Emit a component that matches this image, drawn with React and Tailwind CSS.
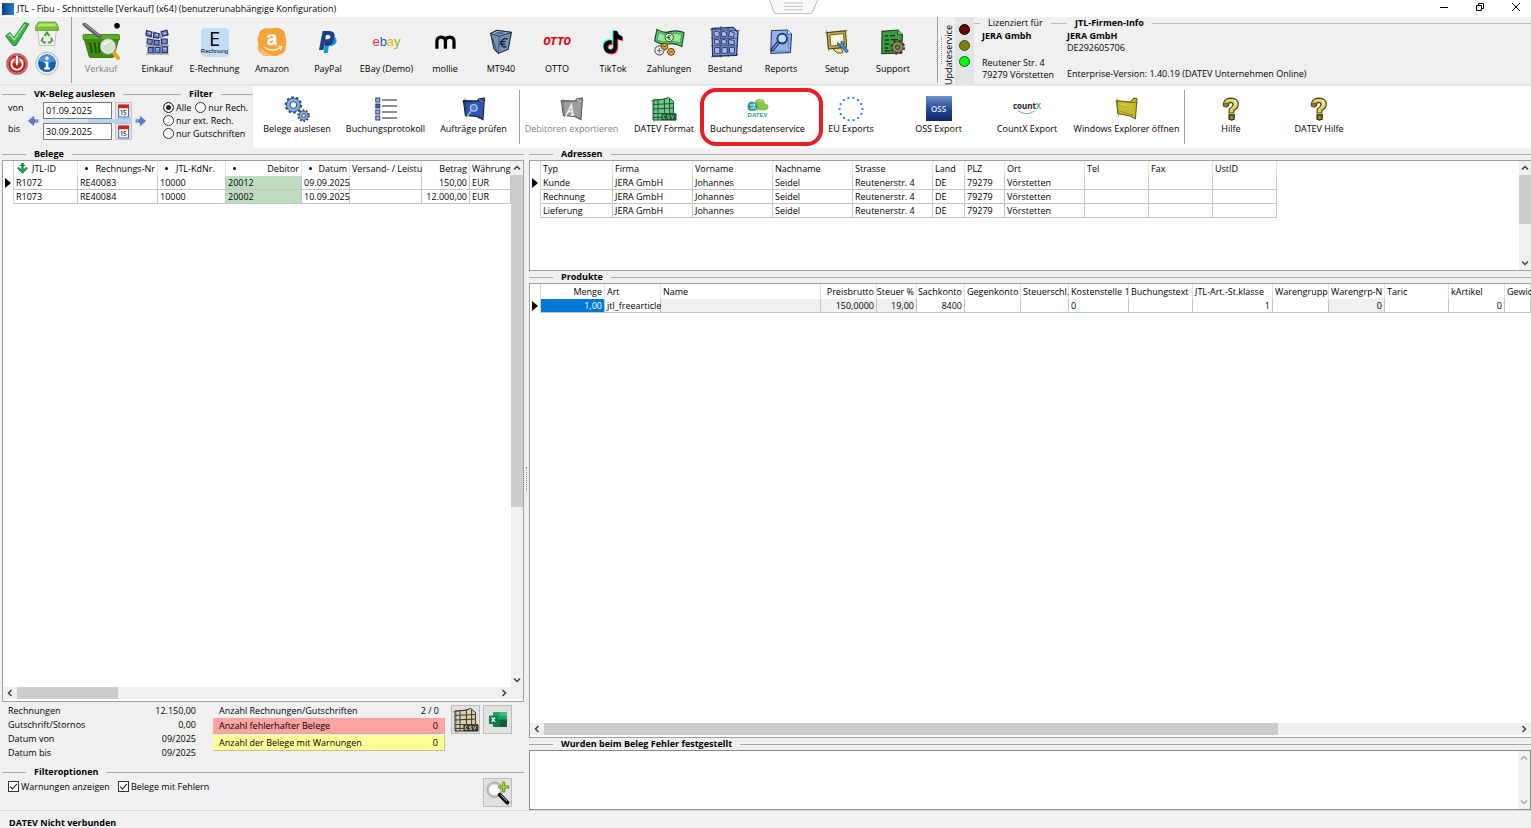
import React, { useState } from "react";

/* ---------- drawings ---------- */

const Svg = ({ w = 32, h = 32, box = "0 0 32 32", children }) => (
  <svg width={w} height={h} viewBox={box} fill="none" aria-hidden="true" className="block shrink-0">
    {children}
  </svg>
);

const CheckIcon = () => (
  <Svg w={26} h={26} box="0 0 26 26">
    <path d="M1.5 15 L6 11.5 L10 16.5 L20.5 1.5 L25 3 L12 24.5 L9 24.5 Z" fill="#3fae49" stroke="#2c8a38" strokeLinejoin="round" />
    <path d="M4 15 L6 13.4 L10.2 18.8 L21 3.4" stroke="#8fe08f" strokeWidth="1.6" />
  </Svg>
);

const RecycleIcon = () => (
  <Svg w={26} h={26} box="0 0 26 26">
    <path d="M3.5 8 L5.5 24.5 H20.5 L22.5 8 Z" fill="#f3f3f3" stroke="#bdbdbd" />
    <path d="M4 1.5 Q4 1 5 1 H21 Q22 1 22 1.5 L24.5 6 V9.5 H1.5 V6 Z" fill="#7cc13a" stroke="#5e9e26" strokeWidth=".8" />
    <path d="M5 2.6 H21 L22.6 5.4 H3.4 Z" fill="#b7e37c" />
    <path d="M10.6 15 L13 11.5 L15.4 15 M17 16.5 L18.2 19.5 L16 21.6 H13.8 M9 16.5 L7.8 19.5 L10 21.6 H12" stroke="#4fa02c" strokeWidth="2" />
  </Svg>
);

const PowerIcon = () => (
  <Svg w={24} h={24} box="0 0 24 24">
    <circle cx="12" cy="12" r="10.6" fill="#c4161c" stroke="#8f8f8f" strokeWidth="1" />
    <circle cx="12" cy="12" r="9.3" fill="none" stroke="#f2a2a2" strokeWidth=".9" />
    <path d="M4 10 A8.5 8 0 0 1 20 10 Q12 13 4 10Z" fill="#e2575b" />
    <path d="M8.6 7.8 A5.6 5.6 0 1 0 15.4 7.8 M12 4.6 V12.4" stroke="#fff" strokeWidth="2" strokeLinecap="round" />
  </Svg>
);

const InfoIcon = () => (
  <Svg w={24} h={25} box="0 0 24 25">
    <circle cx="12" cy="12.4" r="11.2" fill="#eef0f2" stroke="#a7abb0" strokeWidth=".9" />
    <circle cx="12" cy="12.2" r="8.9" fill="#1560ae" />
    <path d="M4 10 A8.2 7.6 0 0 1 20 10 Q12 13.4 4 10Z" fill="#4b93d6" />
    <circle cx="12" cy="7.3" r="1.7" fill="#fff" />
    <path d="M9.4 10.4 H13.4 V16.6 H15 V18.4 H9.2 V16.6 H10.8 V12.2 H9.4 Z" fill="#fff" />
  </Svg>
);

const BasketIcon = () => (
  <Svg w={38} h={38} box="0 0 38 38">
    <path d="M2 15 H37 L32 33 Q31.6 34.5 30 34.5 H9 Q7.4 34.5 7 33 Z" fill="#3f8f12" stroke="#2c5f10" strokeWidth=".8" />
    <path d="M1 12.5 Q1 11.5 2 11.5 H36.4 Q37.4 11.5 37.4 12.5 V16.8 H1.4 Z" fill="#5cae20" stroke="#35740f" strokeWidth=".8" />
    <path d="M8 19.5 L10 30 M12.5 19.5 L14 30 M17 19.5 L17.4 30 M30.5 19.5 L29.4 24" stroke="#215207" strokeWidth="1.9" />
    <path d="M2.5 1.5 L17.5 13.5" stroke="#5d5f61" strokeWidth="4" strokeLinecap="round" />
    <path d="M3 1.2 L17.5 12.6" stroke="#9a9c9e" strokeWidth="1.2" strokeLinecap="round" />
    <path d="M30.5 28 L36 35" stroke="#f0a51c" strokeWidth="4" strokeLinecap="round" />
    <circle cx="26" cy="23.5" r="6.8" fill="#cfe6c4" stroke="#e6e6e6" strokeWidth="2.2" />
    <circle cx="26" cy="23.5" r="7.8" stroke="#878787" strokeWidth=".7" />
    <path d="M22.3 22 A4.5 4.5 0 0 1 27 19.3" stroke="#fff" strokeWidth="1.5" />
    <circle cx="35" cy="2.8" r="2.8" fill="#000" />
  </Svg>
);

const BlocksIcon = () => (
  <Svg w={26} h={28} box="0 0 26 28">
    <path d="M2.6 2.4 L8 4.2 L7 9 L2 7.4Z M10.2 4.6 L15.4 5.8 L14.6 10.4 L9.4 9.2Z M17.6 3.6 L23 2.2 L24 7 L18.4 8.2Z M3.4 10.8 L8.4 11.8 L8 16.4 L3 15.8Z M10.4 12 L15.2 12.6 L15 17.2 L10.2 16.6Z M17.6 11 H23.2 V16 H17.6Z M4.2 19.4 H9 V24.8 H4.2Z M11 19.4 H16 V24.8 H11Z M18.2 18.8 H23.6 V24.6 H18.2Z" fill="#7389dc" stroke="#272d5c" strokeWidth="1.1" />
    <path d="M1 5 L8.6 9.4 L17 9.4 L25 5.4 M1.6 17.8 H25 M9.6 3 L9.6 26.4 M16.8 2.6 L17 26.4 M2 26 H24.6" stroke="#20274f" strokeWidth=".5" />
    <path d="M4 4.2 L6.8 5.2 M11.4 6.4 L14 7 M19.4 5.6 L22 5 M12 20.8 H14.6 M19.4 20.6 H22" stroke="#bccbff" strokeWidth="1" />
  </Svg>
);

const ERechnungIcon = () => (
  <span className="flex h-[29px] w-7 flex-col items-center justify-center rounded bg-[#c3dcf8] text-black">
    <span className="font-['Open_Sans',sans-serif] text-xl leading-[18px]">E</span>
    <span className="font-['Liberation_Sans',sans-serif] text-[6px] leading-[7px]">Rechnung</span>
  </span>
);

const AmazonIcon = () => (
  <Svg w={30} h={30} box="0 0 30 30">
    <path d="M5 2.5 Q9 .6 13 1.6 Q20 -.4 24 2 Q28.6 4 28.4 10 Q30.4 15 28.6 20 Q28.8 26 23.6 27.2 Q18 30.4 13 28.6 Q6.4 30.2 4 26.6 Q-.4 23 1.6 17.4 Q-.6 12 1.8 8.4 Q1.8 4.4 5 2.5Z" fill="#f8a23a" />
    <path d="M3 20 Q8 27 17 28 Q8 29.6 4 26.6Z" fill="#fbbd70" />
    <path d="M11.2 10.4 Q11.8 8.2 14.8 8.2 Q18 8.2 18 11 V15 Q18 16.6 19.2 17.8 M17.8 12.2 Q11.4 11.9 11.4 15 Q11.4 17.2 13.7 17.2 Q16.8 17.2 17.8 14" stroke="#fff" strokeWidth="2.5" />
    <path d="M6.6 19.6 Q14.6 25.8 23.4 20.8 M21.4 19.4 Q24 19 24.6 19.6 Q24.6 21 23.2 22.8" stroke="#fff" strokeWidth="1.2" />
  </Svg>
);

const PaypalIcon = () => (
  <Svg w={18} h={22} box="0 0 18 22">
    <path d="M15.6 6 Q19 8.6 16.9 12.2 Q15 15 10.9 15 H9.9 L8.7 22 H4.6 L6.6 8Z" fill="#139ad6" />
    <path d="M3.6 0 H10.4 Q16.4 .3 15.6 6 Q14.6 12 8.4 12 H6 L4.4 19 H0 Z" fill="#1f3f86" />
    <path d="M15.6 6 Q14.6 12 8.4 12 H6.2 L5.6 15.2 Q6 14.6 7 14.4 H9 Q14.8 13.6 15.6 6Z" fill="#232c65" />
    <path d="M7 4 H9.4 Q11.8 4.2 11.4 6.2 Q10.8 8.2 8.6 8.2 H6.2Z" fill="#f0f0f0" />
  </Svg>
);

const EbayIcon = () => (
  <span className="flex font-['Liberation_Sans',sans-serif] text-[13px] leading-4">
    <span className="text-[#e53238]">e</span>
    <span className="text-[#0064d2]">b</span>
    <span className="text-[#f5af02]">a</span>
    <span className="text-[#86b817]">y</span>
  </span>
);

const MollieIcon = () => (
  <Svg w={21} h={14} box="0 0 22 14">
    <path d="M2 14 V6.4 Q2 1.8 6.4 1.8 Q10.9 1.8 10.9 6.4 V14 M10.9 6.4 Q10.9 1.8 15.4 1.8 Q19.9 1.8 19.9 6.4 V14" stroke="#000" strokeWidth="3.4" />
  </Svg>
);

const Mt940Icon = () => (
  <Svg w={24} h={26} box="0 0 24 26">
    <path d="M1.6 4.6 L8 1.4 L22.4 3.4 L19.2 20.4 L9.4 24.4 L5 20Z" fill="#7192b8" stroke="#232a35" strokeWidth="1.1" />
    <path d="M1.6 4.6 L10.4 7.2 L22.4 3.4 L8 1.4Z" fill="#b5cde6" stroke="#232a35" strokeWidth="1" />
    <path d="M5 4.6 L10.4 6 L17.6 3.8 L9 2.6Z" fill="#496c94" />
    <path d="M10.4 7.2 L9.4 24.4 M3.4 9 L8 23" stroke="#2c3a4c" strokeWidth=".7" />
    <path d="M18.6 10 Q13 8.6 12.4 13.6 Q12 18.6 17.4 17.8 M10.8 12.6 H16.6 M10.6 15.2 H16" stroke="#141a24" strokeWidth="1.3" />
  </Svg>
);

const OttoIcon = () => (
  <span className="font-['Roboto',sans-serif] text-[11px] font-black italic leading-4 text-[#e30613]">OTTO</span>
);

const TiktokShape = ({ fill }) => (
  <path d="M10.4 0 H14.2 Q14.6 4.4 19 5 V9 Q16.4 9 14.2 7.4 V15.6 Q14 22.4 7.6 22.6 Q.6 22.2 .6 15.6 Q1 8.8 8.6 9 V13 Q4.8 12.6 4.6 15.8 Q4.8 18.6 7.6 18.6 Q10.4 18.4 10.4 15.4 Z" fill={fill} />
);
const TiktokIcon = () => (
  <Svg w={22} h={25} box="-1 -1 22 25">
    <g transform="translate(-1 -1)"><TiktokShape fill="#25f4ee" /></g>
    <g transform="translate(1 1)"><TiktokShape fill="#fe2c55" /></g>
    <TiktokShape fill="#000" />
  </Svg>
);

const MoneyIcon = () => (
  <Svg w={32} h={28} box="0 0 32 28">
    <path d="M4 1.4 Q11 6 17 3.6 Q24 1.8 31 4.6 L28.8 18.6 Q22 14.6 16 16 Q8 17.4 1.6 12.8 Z" fill="#5fce6c" stroke="#1f3a22" strokeWidth="1.1" />
    <path d="M6 4.4 Q11 7.6 17 5.8 Q23 4.4 28.6 6.6 L27.2 15 Q22 12.6 16 13.8 Q9 15 4 11.6Z" fill="#93e79b" stroke="#2d8a3b" strokeWidth=".7" />
    <circle cx="16.2" cy="9.4" r="4.2" fill="#d8f6d8" stroke="#1f3a22" strokeWidth=".9" />
    <path d="M18.2 7.8 Q14.6 6.8 14.6 9.6 Q14.8 12 18 11 M13.6 9.4 H17" stroke="#1f3a22" strokeWidth=".9" />
    <circle cx="6.4" cy="22.4" r="4.6" fill="#e9e9f4" stroke="#3a3a4a" strokeWidth="1" />
    <path d="M4 22.6 H8.6 M6.4 20 V25" stroke="#555" strokeWidth=".8" />
    <circle cx="11.6" cy="18.4" r="3.2" fill="#e3a035" stroke="#4e3208" strokeWidth=".9" />
    <circle cx="18" cy="23.8" r="3.5" fill="#e9a63c" stroke="#4e3208" strokeWidth=".9" />
    <path d="M10 18.4 H13 M16.4 23.8 H19.8" stroke="#4e3208" strokeWidth=".8" />
  </Svg>
);

const StockIcon = () => (
  <Svg w={30} h={32} box="0 0 30 32">
    <path d="M2 2.4 L23 1.4 L28 6 L26.6 29.4 L2.6 30.2Z" fill="#8ca4dc" stroke="#222c56" strokeWidth="1.2" />
    <path d="M4.4 5 L9.6 6.2 L8.8 11 L4 9.8Z M12 5 L17 6.6 L16 11 L11 10Z M19.6 5 L24.4 7 L23.4 11.6 L18.8 9.8Z M4.6 13 L9.6 14.2 L9 18.6 L4.4 17.6Z M12 13 L16.6 14.2 L16 18.4 L11.4 17.6Z M19 13.4 L24.4 14.6 L24 18.8 L18.6 18Z M4.6 21.6 H9.8 V27.6 H4.6Z M12 21.6 H17.2 V27.4 H12Z M19.4 21.4 H24.6 V27.2 H19.4Z" fill="#a4b9ec" stroke="#2c3a72" strokeWidth="1" />
    <path d="M0 3.4 L29.6 4.6 M1 31 L28.4 28.4 M10.8 0 V31.6 M18 1 L18.2 31 M1 19.8 H28 M1 12 L28 12.4" stroke="#222c56" strokeWidth=".7" />
  </Svg>
);

const ReportIcon = () => (
  <Svg w={24} h={26} box="0 0 24 26">
    <path d="M2.4 1.6 L18.6 1 L22.6 5 L21.4 23.6 L1.8 24.4Z" fill="#92b4e8" stroke="#24345c" strokeWidth="1" />
    <path d="M18.6 1 L18 5.4 L22.6 5" fill="#dbe8fc" stroke="#24345c" strokeWidth=".8" />
    <path d="M9.6 13.2 L3.4 20.6" stroke="#1c2a4e" strokeWidth="3.6" strokeLinecap="round" />
    <path d="M9.2 13.8 L3.8 20.2" stroke="#6c92d4" strokeWidth="1.6" strokeLinecap="round" />
    <circle cx="13.2" cy="9.6" r="4.8" fill="#c8dcfa" stroke="#24417c" strokeWidth="2" />
    <path d="M5 22.2 H20 M19.4 8 V20" stroke="#6284bf" strokeWidth=".8" />
  </Svg>
);

const SetupIcon = () => (
  <Svg w={24} h={26} box="0 0 24 26">
    <path d="M2 3.6 L20.6 1.8 L21.6 18.2 L3.4 20Z" fill="#c9b24a" stroke="#4a3f12" strokeWidth="1" />
    <path d="M4.8 6 L18.6 4.6 L19.2 15.6 L5.8 17.2Z" fill="#fbf6dc" stroke="#4a3f12" strokeWidth=".8" />
    <path d="M8 19.8 Q12 26 18 23.4 L16 19Z" fill="#f0d98a" stroke="#4a3f12" strokeWidth=".9" />
    <path d="M12.6 13.4 Q12 17.6 16 17.4 L21.2 23.8 L23.4 22 L18.4 16.2 Q19.4 12.6 16 12 L16.4 14.6 L14.8 15.4Z" fill="#4f92d6" stroke="#204a7c" strokeWidth=".9" />
    <path d="M0 3.8 L22.8 1.4 M1.6 1 L3.8 22" stroke="#4a3f12" strokeWidth=".5" />
  </Svg>
);

const SupportIcon = () => (
  <Svg w={26} h={27} box="0 0 26 27">
    <path d="M2 2.4 L18 1 L22.4 5.6 L21.6 24 L1.8 24.8Z" fill="#3f9b45" stroke="#173a19" strokeWidth="1.1" />
    <path d="M18 1 L17.6 5.6 L22.4 5.6" fill="#86cf88" stroke="#173a19" strokeWidth=".8" />
    <path d="M4.6 7 L8 6.6 M10 6.6 H15 M4.6 11 H9 M11 10.6 H18 M4.6 15 H9 M4.6 19 H8 M4.6 22 H10" stroke="#173a19" strokeWidth="1.3" />
    <circle cx="17.6" cy="18.2" r="6.3" stroke="#4a382c" strokeWidth="2.4" strokeDasharray="2.6 2.35" />
    <circle cx="17.6" cy="18.2" r="5.4" fill="#a08472" stroke="#4a382c" strokeWidth=".9" />
    <circle cx="17.6" cy="18.2" r="2.2" fill="#4a9b4e" stroke="#3a2a20" strokeWidth=".9" />
  </Svg>
);

const Gear = ({ cx, cy, r, hole }) => (
  <>
    <circle cx={cx} cy={cy} r={r} stroke="#2b4a6e" strokeWidth="2.6" strokeDasharray={`${(r * 6.283) / 20} ${(r * 6.283) / 20}`} />
    <circle cx={cx} cy={cy} r={r - 0.4} fill="#86afd8" stroke="#2b4a6e" strokeWidth=".9" />
    <circle cx={cx} cy={cy} r={hole} fill="#fff" stroke="#2b4a6e" strokeWidth="1" />
  </>
);
const GearsIcon = () => (
  <Svg w={26} h={26} box="0 0 26 26">
    <Gear cx={9.4} cy={9} r={7.4} hole={3.4} />
    <Gear cx={19.6} cy={19.6} r={5} hole={1.9} />
  </Svg>
);

const ListIcon = () => (
  <Svg w={24} h={24} box="0 0 24 24">
    {[2, 8, 14, 20].map((y) => (
      <g key={y}>
        <rect x="1.8" y={y - 1} width="4" height="4" fill={y === 8 ? "#3c63c4" : "#9bb4e4"} stroke="#26345c" strokeWidth=".9" />
        <path d={`M8 ${y + 1} H23`} stroke="#444" strokeWidth="1.2" />
      </g>
    ))}
  </Svg>
);

const OrdersIcon = () => (
  <Svg w={24} h={24} box="0 0 24 24">
    <path d="M1.4 3.6 L15 4 L17 1.8 L22.4 1.2 L21 22.6 L14.6 19.4 L3.4 18.4Z" fill="#3155ac" stroke="#131f44" strokeWidth="1.1" />
    <path d="M17 1.8 L19 4.4 L21.6 4" stroke="#8fb0f0" />
    <circle cx="11.8" cy="10.8" r="3.3" fill="#4f7ad6" stroke="#b4ccfa" strokeWidth="1.2" />
    <path d="M9.4 13.4 L5.4 19" stroke="#9dbaf2" strokeWidth="1.6" />
    <path d="M0 5 L23.6 3.6 M3 1 L4.4 20.4" stroke="#131f44" strokeWidth=".5" />
  </Svg>
);

const DebtorsIcon = () => (
  <Svg w={24} h={24} box="0 0 24 24">
    <path d="M1.4 3.6 L15 4 L17 1.8 L22.4 1.2 L21 22.6 L14.6 19.4 L3.4 18.4Z" fill="#9d9d9d" stroke="#5a5a5a" strokeWidth="1.1" />
    <path d="M17 1.8 L19 4.4 L21.6 4" stroke="#dedede" />
    <path d="M5 20.6 L11.4 8 L12.6 17.6 M7.4 15 L12.4 14.2 M3.6 21 L7 20.6 M10.6 18.2 L14.4 17.8" stroke="#f4f4f4" strokeWidth="1.5" />
    <path d="M0 5 L23.6 3.6 M3 1 L4.4 20.4" stroke="#6b6b6b" strokeWidth=".5" />
  </Svg>
);

const CsvIcon = ({ fill, ink }) => (
  <Svg w={26} h={26} box="0 0 26 26">
    <path d="M2 4 L12 3.4 L17.6 1.4 L22.6 5.6 L22.4 17 L25 18 V24 H2Z" fill={fill} stroke={ink} strokeWidth="1" />
    <path d="M2 8.4 L22 7.6 M2 13 L22 12 M2 17.6 H22 M2 21.4 H11 M7 3.6 V24 M13.4 3 V17 M18.6 2.4 V17" stroke={ink} strokeWidth="1" />
    <path d="M0 5 L16 2.4 M3 2.4 V26" stroke={ink} strokeWidth=".5" />
    <rect x="10.4" y="17.4" width="14.6" height="6.8" fill={ink} />
    <path d="M14.6 19.2 H12.4 V22.4 H14.6 M18.6 19.2 H16.6 V20.8 H18.4 V22.4 H16.4 M20.2 19 L21.6 22.4 L23 19" stroke={fill} strokeWidth=".9" />
  </Svg>
);

const DatevIcon = () => (
  <span className="flex flex-col items-center">
    <Svg w={22} h={14} box="0 0 22 14">
      <path d="M7 12 Q3 12 3.6 8.6 Q4.4 6.4 7 6.6 Q7.4 1 13 1 Q17.6 1.2 18 5.6 Q21.8 6.2 21.4 9.6 Q20.8 12.6 17 12.6Z" fill="#8ac24e" />
      <path d="M10.6 4 Q12.8 1.8 15.4 3.6" stroke="#b4dc8a" strokeWidth="1.2" />
      <path d="M.6 8 Q.6 4 5 3.4 L9.6 5.6 L10.8 9.6 L8 12.8 H3 Q.6 12 .6 8Z" fill="#2394a6" />
      <path d="M2.6 7 H8 M6.4 5.4 L8.2 7 L6.4 8.6 M9 10 H3.4" stroke="#fff" strokeWidth="1" />
    </Svg>
    <span className="font-['Liberation_Sans',sans-serif] text-[6px] font-bold leading-[7px] text-[#1d9a8e]">DATEV</span>
  </span>
);

const EuIcon = () => (
  <Svg w={26} h={26} box="0 0 26 26">
    {Array.from({ length: 14 }, (_, i) => {
      const a = (i / 14) * 2 * Math.PI + 0.22;
      return <rect key={i} x={12 + 11.4 * Math.sin(a)} y={12 - 11.4 * Math.cos(a)} width="2" height="2" fill="#2f86ec" />;
    })}
  </Svg>
);

const OssIcon = () => (
  <span className="flex h-[25px] w-[26px] items-center justify-center bg-linear-to-b from-[#6f8fd0] via-[#2a4c9c] to-[#0c2766] font-['Open_Sans',sans-serif] text-[8px] font-semibold leading-none text-[#e4ecfb]">
    OSS
  </span>
);

const CountxIcon = () => (
  <span className="flex flex-col items-center">
    <span className="font-['Open_Sans',sans-serif] text-[8px] font-bold leading-[8px] text-[#222]">
      count<span className="font-semibold text-[#3b8f6b]">X</span>
    </span>
    <Svg w={20} h={5} box="0 0 20 5">
      <path d="M1 .6 Q9 6.6 18 .8" stroke="#6aa892" strokeWidth=".9" />
    </Svg>
  </span>
);

const FolderIcon = () => (
  <Svg w={24} h={24} box="0 0 24 24">
    <path d="M1.6 3.6 L14 5 L17.6 3.2 L18.4 1.2 L22 1.4 L20.4 22 L15 19 L2.8 16.6Z" fill="#c6bc2e" stroke="#5c5510" strokeWidth="1" />
    <path d="M14 5 L19.8 5.6 L21.8 3" stroke="#8a8218" />
    <path d="M0 4 L23 6 M2 .6 L3.4 20 M4 14 L18 18" stroke="#6b6414" strokeWidth=".5" />
    <path d="M5 7 L17 9" stroke="#d8cf50" strokeWidth="1.2" />
  </Svg>
);

const HelpIcon = () => (
  <Svg w={18} h={24} box="0 0 18 24">
    <path d="M1.4 8.4 Q1 1.4 9 1.2 Q16.4 1.4 16.2 7.6 Q15.8 11.4 11.8 13.4 V16 H7.2 V12 Q10.6 10 11 7.6 Q10.8 5.4 8.6 5.4 Q6.4 5.6 6.6 8.4 L4 10Z" fill="#e0d470" stroke="#4d4712" strokeWidth="1.2" />
    <path d="M1.2 6.2 L6.6 6 L5.4 10 L1.6 9.4Z" fill="#8b8122" stroke="#4d4712" strokeWidth=".7" />
    <path d="M7 17.8 H12.2 V22 L9.6 23.2 L7 22Z" fill="#8f8220" stroke="#2e2a0a" strokeWidth="1.2" />
    <path d="M12.6 3.2 Q14.4 5 14 8" stroke="#fffbd0" strokeWidth="1.1" />
  </Svg>
);

const CalendarIcon = () => (
  <Svg w={13} h={14} box="0 0 14 14">
    <rect x="1.8" y="1" width="10.6" height="12.4" fill="#fff" stroke="#3f74c6" strokeWidth="1.2" />
    <rect x="1.2" y="0" width="11.8" height="4" fill="#d31f1f" />
    <path d="M5.2 6 V11.4 M4 7 L5.2 6.2 M10 6.4 H7.4 V8.4 Q10 8.2 10 9.8 Q9.8 11.4 7.2 11" stroke="#333" strokeWidth=".9" />
  </Svg>
);

const BlueArrow = ({ flip }) => (
  <Svg w={11} h={10} box="0 0 11 10">
    <g transform={flip ? "matrix(-1 0 0 1 11 0)" : undefined}>
      <path d="M5.6 .4 L.4 5 L5.6 9.6 V6.6 H7 V3.4 H5.6Z" fill="#5d7bd0" stroke="#3a57ab" strokeWidth=".6" />
      <path d="M8 3.2 V6.8 M9.8 3.2 V6.8" stroke="#3a57ab" strokeWidth="1" />
    </g>
  </Svg>
);

const SortIcon = () => (
  <Svg w={11} h={11} box="0 0 11 11">
    <path d="M4.6 0 H6.4 V7 L9.2 4.2 L10.6 5.4 L5.5 10.6 L.4 5.4 L1.8 4.2 L4.6 7Z" fill="#27a048" stroke="#14702b" strokeWidth=".6" />
    <path d="M2.6 2.4 H8.4" stroke="#1c8038" strokeWidth="1" />
  </Svg>
);

const ExcelIcon = () => (
  <Svg w={18} h={16} box="0 0 18 16">
    <rect x="4" y="0" width="14" height="15" rx="1" fill="#21a366" />
    <path d="M4 7.6 H18 V14 Q18 15 17 15 H5 Q4 15 4 14Z" fill="#107c41" />
    <path d="M11 7.6 H18 V14 Q18 15 17 15 H11Z" fill="#185c37" />
    <path d="M11 0 H17 Q18 0 18 1 V3.8 H11Z" fill="#33c481" />
    <rect x="0" y="3.4" width="8.6" height="8.6" rx=".8" fill="#107c41" />
    <path d="M2.6 5.4 L6 10 M6 5.4 L2.6 10" stroke="#fff" strokeWidth="1.2" />
  </Svg>
);

const ZoomAddIcon = () => (
  <Svg w={24} h={24} box="0 0 24 24">
    <circle cx="8.6" cy="8.8" r="6.6" fill="#fafafa" stroke="#c3c3c3" strokeWidth="2.2" />
    <circle cx="8.6" cy="8.8" r="7.8" stroke="#8d8d8d" strokeWidth=".6" />
    <path d="M13.8 13.8 L21.4 21.6" stroke="#111" strokeWidth="4" strokeLinecap="round" />
    <path d="M14.6 13.8 L21 20.2" stroke="#c9c9c9" strokeWidth="1" />
    <path d="M16.7 1 H18.7 V4.9 H22.8 V7.1 H18.7 V11 H16.7 V7.1 H12.8 V4.9 H16.7Z" fill="#b5dd2b" stroke="#5b8c0e" strokeWidth=".9" />
  </Svg>
);

const Chevron = ({ dir, color = "#404040" }) => {
  const d = {
    up: "M1 5.5 L4 2.5 L7 5.5",
    down: "M1 2.5 L4 5.5 L7 2.5",
    left: "M5.5 1 L2.5 4 L5.5 7",
    right: "M2.5 1 L5.5 4 L2.5 7",
  }[dir];
  return (
    <Svg w={8} h={8} box="0 0 8 8">
      <path d={d} stroke={color} strokeWidth="1.5" />
    </Svg>
  );
};

const RowMarker = () => (
  <Svg w={6} h={10} box="0 0 6 10">
    <path d="M0 0 L6 5 L0 10Z" fill="#000" />
  </Svg>
);

/* ---------- shared parts ---------- */

const GroupTitle = ({ children }) => (
  <div className="flex h-3 items-center gap-2">
    <span className="h-px w-6 bg-[#a8a8a8]" />
    <h2 className="whitespace-nowrap font-bold leading-3">{children}</h2>
    <span className="h-px flex-1 bg-[#a8a8a8]" />
  </div>
);

const ToolButton = ({ icon, label, disabled, width = "w-14", children, row }) => (
  <button
    type="button"
    disabled={disabled}
    className={`relative flex shrink-0 flex-col items-center ${width} ${disabled ? "text-[#838383]" : "text-black"}`}
  >
    <span className={`flex items-center justify-center ${row}`}>{icon}</span>
    <span className="whitespace-nowrap leading-3">{label}</span>
    {children}
  </button>
);

const VScroll = ({ thumb, color }) => (
  <div className="flex w-3 shrink-0 flex-col items-center justify-between bg-[#f0f0f0]">
    <span className="flex h-[14px] items-center"><Chevron dir="up" color={color} /></span>
    {thumb}
    <span className="mt-auto flex h-[14px] items-center"><Chevron dir="down" color={color} /></span>
  </div>
);

const HScroll = ({ thumb, corner }) => (
  <div className={`mb-[2px] flex h-3 shrink-0 items-center bg-[#f0f0f0] ${corner ? "pr-3" : ""}`}>
    <span className="flex w-[14px] justify-center"><Chevron dir="left" /></span>
    {thumb}
    <span className="ml-auto flex w-[14px] justify-center"><Chevron dir="right" /></span>
  </div>
);

function Grid({ label, widths, columns, rows }) {
  return (
    <table aria-label={label} className="w-0 table-fixed border-separate border-spacing-0">
      <colgroup>
        <col className="w-[11px]" />
        {widths.map((w, i) => (
          <col key={i} className={w} />
        ))}
      </colgroup>
      <thead>
        <tr className="h-[15px]">
          <th className="border-r border-[#d4d4d4] p-0" aria-label="Zeile" />
          {columns.map((c) => (
            <th key={c.name} scope="col" className="border-r border-[#e4e4e4] px-[2px] py-0 font-normal">
              <div className={`flex h-[14px] items-center whitespace-nowrap ${c.right ? "justify-end" : ""}`}>
                {c.mark && (
                  <span className={`flex justify-center ${c.right ? "mr-auto" : "mr-1"} w-3`}>
                    {c.mark === "sort" ? <SortIcon /> : <span className="size-[3px] rounded-full bg-black" />}
                  </span>
                )}
                <span>{c.name}</span>
              </div>
            </th>
          ))}
        </tr>
      </thead>
      <tbody>
        {rows.map((r, ri) => (
          <tr key={ri} className="h-[14px]">
            <td className="border-r border-[#d4d4d4] p-0">
              <span className="flex h-[13px] items-center justify-center">{ri === 0 && <RowMarker />}</span>
            </td>
            {r.map((v, ci) => {
              const c = columns[ci];
              return (
                <td
                  key={ci}
                  className={`whitespace-nowrap border-b border-r border-[#c4c4c4] px-[2px] py-0 leading-[13px] ${
                    c.right ? "text-right" : ""
                  } ${c.cell || ""}`}
                >
                  {v}
                </td>
              );
            })}
          </tr>
        ))}
      </tbody>
    </table>
  );
}

/* ---------- data ---------- */

const modules = [
  ["Verkauf", <BasketIcon />, "w-14", true],
  ["Einkauf", <BlocksIcon />],
  ["E-Rechnung", <ERechnungIcon />, "w-[59px]"],
  ["Amazon", <AmazonIcon />],
  ["PayPal", <PaypalIcon />],
  ["EBay (Demo)", <EbayIcon />, "w-[61px]"],
  ["mollie", <MollieIcon />],
  ["MT940", <Mt940Icon />],
  ["OTTO", <OttoIcon />],
  ["TikTok", <TiktokIcon />],
  ["Zahlungen", <MoneyIcon />],
  ["Bestand", <StockIcon />],
  ["Reports", <ReportIcon />],
  ["Setup", <SetupIcon />],
  ["Support", <SupportIcon />],
];

const belegeCols = [
  { name: "JTL-ID", mark: "sort" },
  { name: "Rechnungs-Nr", mark: "dot", right: true, cell: "!text-left" },
  { name: "JTL-KdNr.", mark: "dot" },
  { name: "Debitor", mark: "dot", right: true, cell: "!text-left bg-[#c0dcc0]" },
  { name: "Datum", mark: "dot", right: true },
  { name: "Versand- / Leistu" },
  { name: "Betrag", right: true },
  { name: "Währung" },
];
const belege = [
  ["R1072", "RE40083", "10000", "20012", "09.09.2025", "", "150,00", "EUR"],
  ["R1073", "RE40084", "10000", "20002", "10.09.2025", "", "12.000,00", "EUR"],
];
const belegeWidths = ["w-16", "w-20", "w-[68px]", "w-[76px]", "w-12", "w-[72px]", "w-12", "w-[41px]"];

const adressCols = ["Typ", "Firma", "Vorname", "Nachname", "Strasse", "Land", "PLZ", "Ort", "Tel", "Fax", "UstID"].map((name) => ({ name }));
const adressen = ["Kunde", "Rechnung", "Lieferung"].map((t) => [
  t, "JERA GmbH", "Johannes", "Seidel", "Reutenerstr. 4", "DE", "79279", "Vörstetten", "", "", "",
]);
const adressWidths = ["w-[72px]", "w-20", "w-20", "w-20", "w-20", "w-8", "w-10", "w-20", "w-16", "w-16", "w-16"];

const produktCols = [
  { name: "Menge", right: true, cell: "bg-[#0078d7] text-white" },
  { name: "Art" },
  { name: "Name", cell: "bg-[#f0f0f0]" },
  { name: "Preisbrutto", right: true, cell: "bg-[#f0f0f0]" },
  { name: "Steuer %", right: true, cell: "bg-[#f0f0f0]" },
  { name: "Sachkonto", right: true },
  { name: "Gegenkonto" },
  { name: "Steuerschl." },
  { name: "Kostenstelle 1" },
  { name: "Buchungstext" },
  { name: "JTL-Art.-St.klasse", cell: "text-right" },
  { name: "Warengrupp" },
  { name: "Warengrp-N", cell: "bg-[#f0f0f0] text-right" },
  { name: "Taric" },
  { name: "kArtikel", cell: "text-right" },
  { name: "Gewic" },
];
const produkte = [["1,00", "jtl_freearticle", "", "150,0000", "19,00", "8400", "", "", "0", "", "1", "", "0", "", "0", ""]];
const produktWidths = [
  "w-16", "w-14", "w-40", "w-14", "w-10", "w-12", "w-14", "w-12", "w-[60px]", "w-16", "w-20", "w-14", "w-14", "w-16", "w-14", "w-[26px]",
];

/* ---------- page sections ---------- */

function TitleBar() {
  return (
    <header className="relative flex h-[17px] shrink-0 items-center bg-white pl-[2px]">
      <span className="size-3 bg-linear-to-r from-[#0b3f86] to-[#2c7fc4]" />
      <h1 className="ml-[3px] leading-4">JTL - Fibu - Schnittstelle [Verkauf] (x64) (benutzerunabhängige Konfiguration)</h1>
      <div className="absolute left-1/2 top-0 ml-[2px]">
        <Svg w={52} h={15} box="0 0 52 15">
          <path d="M1 -1 L6 12 Q6.6 13.6 8.4 13.6 H42 Q44 13.6 44.6 12 L50 -1" fill="#fafafa" stroke="#b9b9b9" />
          <path d="M16 3 H35 M16 6.4 H35 M16 9.8 H35" stroke="#bdbdbd" />
        </Svg>
      </div>
      <div className="ml-auto flex items-center gap-[26px] pb-[3px] pr-[10px]">
        <button type="button" aria-label="Minimieren">
          <Svg w={10} h={10} box="0 0 10 10"><path d="M1 5.5 H9" stroke="#000" /></Svg>
        </button>
        <button type="button" aria-label="Wiederherstellen">
          <Svg w={10} h={10} box="0 0 10 10"><path d="M1.5 3.5 H6.5 V8.5 H1.5Z M3.5 3 V1.5 H8.5 V6.5 H7" stroke="#000" /></Svg>
        </button>
        <button type="button" aria-label="Schließen">
          <Svg w={10} h={10} box="0 0 10 10"><path d="M1 1 L9 9 M9 1 L1 9" stroke="#000" /></Svg>
        </button>
      </div>
    </header>
  );
}

function ModuleBar() {
  return (
    <nav className="flex h-[69px] shrink-0 border-b-2 border-[#e6e6e6]">
      <div className="grid w-[71px] shrink-0 grid-cols-[30px_30px] content-start justify-items-center gap-y-1 pl-[2px] pt-1">
        <button type="button" aria-label="Übernehmen"><CheckIcon /></button>
        <button type="button" aria-label="Papierkorb"><RecycleIcon /></button>
        <button type="button" aria-label="Beenden"><PowerIcon /></button>
        <button type="button" aria-label="Info"><InfoIcon /></button>
      </div>
      <span className="mb-[1px] w-px shrink-0 bg-[#a0a0a0]" />
      <div className="flex pl-px">
        {modules.map(([label, icon, width, disabled]) => (
          <ToolButton key={label} label={label} icon={icon} width={width} disabled={disabled} row="h-[46px] pt-1" />
        ))}
      </div>
      <div className="ml-4 flex flex-1">
        <span className="mb-[1px] w-px shrink-0 bg-[#a0a0a0]" />
        <span className="my-5 ml-[3px] w-0 border-l border-dotted border-[#909090]" />
        <span className="flex w-[13px] items-center justify-center pt-2 leading-3 [writing-mode:vertical-rl]">
          <span className="rotate-180">Updateservice</span>
        </span>
        <div className="flex w-[19px] shrink-0 flex-col items-center gap-[5px] bg-[#e3e3e3] pt-[7px]">
          <span className="size-[11px] rounded-full border border-black bg-[#6c0000]" />
          <span className="size-[11px] rounded-full border border-[#444] bg-[#808000]" />
          <span className="size-[11px] rounded-full border border-[#063] bg-[#00ff00]" />
        </div>
        <section className="w-[85px] shrink-0">
          <div className="flex h-3 items-center gap-2">
            <span className="h-px w-[6px] bg-[#b8b8b8]" />
            <h2 className="whitespace-nowrap">Lizenziert für</h2>
            <span className="h-px flex-1 bg-[#b8b8b8]" />
          </div>
          <address className="whitespace-nowrap pl-2 not-italic leading-3">
            <strong className="block pt-[1px]">JERA Gmbh</strong>
            <span className="block pt-[15px]">Reutener Str. 4</span>
            <span className="block">79279 Vörstetten</span>
          </address>
        </section>
        <section className="flex-1">
          <div className="flex h-3 items-center gap-2">
            <span className="h-px w-2 bg-[#b8b8b8]" />
            <h2 className="whitespace-nowrap font-bold">JTL-Firmen-Info</h2>
            <span className="h-px flex-1 bg-[#b8b8b8]" />
          </div>
          <div className="whitespace-nowrap pl-2 leading-3">
            <strong className="block pt-[1px]">JERA GmbH</strong>
            <span className="block">DE292605706</span>
            <span className="block pt-[14px]">Enterprise-Version: 1.40.19 (DATEV Unternehmen Online)</span>
          </div>
        </section>
      </div>
    </nav>
  );
}

const DateField = ({ label, value, onChange }) => (
  <div className="flex items-center gap-[3px]">
    <input
      type="text"
      aria-label={label}
      value={value}
      onChange={(e) => onChange(e.target.value)}
      className="h-[17px] w-[69px] border border-[#7a7a7a] bg-white px-[2px] leading-3 outline-none"
    />
    <button type="button" aria-label={`Kalender ${label}`} className="flex size-[17px] items-center justify-center border border-[#c4c4c4] bg-[#e6e6e6]">
      <CalendarIcon />
    </button>
  </div>
);

function FilterPanel() {
  const [from, setFrom] = useState("01.09.2025");
  const [to, setTo] = useState("30.09.2025");
  const [mode, setMode] = useState("Alle");
  const radio = (name) => (
    <label className="flex items-center gap-[2px] whitespace-nowrap">
      <input
        type="radio"
        name="belegfilter"
        checked={mode === name}
        onChange={() => setMode(name)}
        className="size-[11px] appearance-none rounded-full border border-[#333] bg-white checked:bg-[#222] checked:shadow-[inset_0_0_0_2px_#fff]"
      />
      {name}
    </label>
  );
  return (
    <div className="flex w-[253px] shrink-0 pl-[2px] pt-[2px]">
      <section className="w-[155px] shrink-0">
        <GroupTitle>VK-Beleg auslesen</GroupTitle>
        <div className="flex pl-[6px] pt-[2px]">
          <div className="flex w-5 flex-col gap-[10px] leading-[11px]">
            <span>von</span>
            <span>bis</span>
          </div>
          <button type="button" aria-label="Zeitraum zurück" className="flex w-[15px] items-center"><BlueArrow /></button>
          <div>
            <DateField label="von" value={from} onChange={setFrom} />
            <div className="flex h-1">
              <span className="flex-1 bg-[#d6e6f7]" />
              <span className="flex-1 bg-[#b7d3f0]" />
            </div>
            <DateField label="bis" value={to} onChange={setTo} />
          </div>
          <button type="button" aria-label="Zeitraum vor" className="flex items-center pl-[3px]"><BlueArrow flip /></button>
        </div>
      </section>
      <section className="flex-1">
        <GroupTitle>Filter</GroupTitle>
        <div className="flex flex-col gap-[2px] pl-[6px] pt-[2px] leading-[11px]">
          <div className="flex gap-1">{radio("Alle")}{radio("nur Rech.")}</div>
          {radio("nur ext. Rech.")}
          {radio("nur Gutschriften")}
        </div>
      </section>
    </div>
  );
}

const Divider = () => <span className="mx-[2px] my-1 w-px shrink-0 bg-[#a0a0a0]" />;

function ActionBar() {
  const row = "h-[37px] pt-2";
  return (
    <div className="flex h-[62px] shrink-0">
      <FilterPanel />
      <div className="flex flex-1 bg-white">
        <ToolButton row={row} width="w-[88px]" label="Belege auslesen" icon={<GearsIcon />} />
        <ToolButton row={row} width="w-[89px]" label="Buchungsprotokoll" icon={<ListIcon />} />
        <ToolButton row={row} width="w-[87px]" label="Aufträge prüfen" icon={<OrdersIcon />} />
        <Divider />
        <ToolButton row={row} width="w-[99px]" label="Debitoren exportieren" icon={<DebtorsIcon />} disabled />
        <ToolButton row={row} width="w-[86px]" label="DATEV Format" icon={<CsvIcon fill="#6fca8a" ink="#1d5230" />} />
        <ToolButton row={row} width="w-[101px]" label="Buchungsdatenservice" icon={<DatevIcon />}>
          <span className="absolute -left-[7px] -right-[15px] bottom-[2px] top-[2px] rounded-2xl border-4 border-[#ed1c24]" />
        </ToolButton>
        <ToolButton row={row} width="w-[86px]" label="EU Exports" icon={<EuIcon />} />
        <ToolButton row={row} width="w-[89px]" label="OSS Export" icon={<OssIcon />} />
        <ToolButton row={row} width="w-[88px]" label="CountX Export" icon={<CountxIcon />} />
        <ToolButton row={row} width="w-[111px]" label="Windows Explorer öffnen" icon={<FolderIcon />} />
        <Divider />
        <ToolButton row={row} width="w-[88px]" label="Hilfe" icon={<HelpIcon />} />
        <ToolButton row={row} width="w-[88px]" label="DATEV Hilfe" icon={<HelpIcon />} />
      </div>
    </div>
  );
}

const SquareButton = ({ label, children }) => (
  <button type="button" aria-label={label} className="flex size-[29px] shrink-0 items-center justify-center border border-[#bcbcbc] bg-[#e1e1e1]">
    {children}
  </button>
);

function Summary() {
  return (
    <div className="flex gap-2 pl-[6px] pt-[2px] leading-[14px]">
      <dl className="grid w-[188px] shrink-0 grid-cols-[1fr_auto] content-start">
        <dt>Rechnungen</dt><dd className="text-right">12.150,00</dd>
        <dt>Gutschrift/Stornos</dt><dd className="text-right">0,00</dd>
        <dt>Datum von</dt><dd className="text-right">09/2025</dd>
        <dt>Datum bis</dt><dd className="text-right">09/2025</dd>
      </dl>
      <dl className="ml-[9px] w-[232px] shrink-0">
        <div className="flex justify-between px-[6px]"><dt>Anzahl Rechnungen/Gutschriften</dt><dd>2 / 0</dd></div>
        <div className="flex justify-between border-b border-r border-[#c9a9a9] bg-[#ffa3a3] px-[6px] leading-[15px]"><dt>Anzahl fehlerhafter Belege</dt><dd>0</dd></div>
        <div className="mt-[1px] flex justify-between border-b border-r border-[#c4c48a] bg-[#ffff99] px-[6px] leading-[15px]"><dt>Anzahl der Belege mit Warnungen</dt><dd>0</dd></div>
      </dl>
      <div className="-ml-[2px] flex gap-[3px] pt-[1px]">
        <SquareButton label="CSV exportieren"><CsvIcon fill="#d8cfb4" ink="#3a372c" /></SquareButton>
        <SquareButton label="Excel exportieren"><ExcelIcon /></SquareButton>
      </div>
    </div>
  );
}

const Tick = ({ label }) => (
  <label className="flex items-center gap-[2px] whitespace-nowrap">
    <span className="grid size-[11px] place-items-center">
      <input type="checkbox" defaultChecked className="peer col-start-1 row-start-1 size-[11px] appearance-none border border-[#333] bg-white" />
      <svg viewBox="0 0 9 9" className="pointer-events-none col-start-1 row-start-1 hidden size-[9px] peer-checked:block" fill="none">
        <path d="M1 4.6 L3.4 7 L8 1.8" stroke="#222" strokeWidth="1.1" />
      </svg>
    </span>
    {label}
  </label>
);

function BelegePanel() {
  return (
    <section className="flex w-[522px] shrink-0 flex-col">
      <GroupTitle>Belege</GroupTitle>
      <div className="flex flex-1 flex-col border border-[#a0a0a0] bg-white">
        <div className="flex flex-1">
          <div className="w-[508px]">
            <Grid label="Belege" widths={belegeWidths} columns={belegeCols} rows={belege} />
          </div>
          <VScroll thumb={<span className="h-[332px] w-3 bg-[#cdcdcd]" />} />
        </div>
        <HScroll corner thumb={<span className="h-3 w-[101px] bg-[#cdcdcd]" />} />
      </div>
      <Summary />
      <div className="pt-[6px]"><GroupTitle>Filteroptionen</GroupTitle></div>
      <div className="flex h-8 items-start gap-2 pl-[6px] pr-3">
        <div className="flex gap-2 pt-[3px] leading-[11px]">
          <Tick label="Warnungen anzeigen" />
          <Tick label="Belege mit Fehlern" />
        </div>
        <span className="ml-auto"><SquareButton label="Suche hinzufügen"><ZoomAddIcon /></SquareButton></span>
      </div>
    </section>
  );
}

function DetailPanel() {
  return (
    <div className="flex min-w-0 flex-1 flex-col">
      <GroupTitle>Adressen</GroupTitle>
      <div className="flex h-[111px] shrink-0 border border-r-0 border-[#a0a0a0] bg-white">
        <div className="min-w-0 flex-1 overflow-hidden">
          <Grid label="Adressen" widths={adressWidths} columns={adressCols} rows={adressen} />
        </div>
        <VScroll thumb={<span className="h-[49px] w-3 bg-[#cdcdcd]" />} />
      </div>
      <GroupTitle>Produkte</GroupTitle>
      <div className="flex flex-1 flex-col border border-r-0 border-[#a0a0a0] bg-white">
        <div className="min-w-0 flex-1 overflow-hidden">
          <Grid label="Produkte" widths={produktWidths} columns={produktCols} rows={produkte} />
        </div>
        <HScroll thumb={<span className="h-3 w-3/4 max-w-[734px] bg-[#cdcdcd]" />} />
      </div>
      <GroupTitle>Wurden beim Beleg Fehler festgestellt</GroupTitle>
      <div className="flex h-[60px] shrink-0 border border-[#8a8a8a] bg-white">
        <textarea readOnly aria-label="Fehler im Beleg" className="flex-1 resize-none p-1 outline-none" />
        <VScroll color="#a8a8a8" />
      </div>
    </div>
  );
}

export default function App() {
  return (
    <div className="flex min-h-screen flex-col overflow-hidden bg-[#f0f0f0] font-['Open_Sans',sans-serif] text-[9px] leading-3 text-black">
      <TitleBar />
      <ModuleBar />
      <ActionBar />
      <main className="flex flex-1 pl-[2px]">
        <BelegePanel />
        <div className="flex w-[5px] shrink-0 items-center justify-center">
          <span className="h-6 border-l border-dotted border-[#909090]" />
        </div>
        <DetailPanel />
      </main>
      <footer className="h-[18px] shrink-0 border-t border-[#d9d9d9] pl-[9px] pt-[6px] font-bold leading-3">DATEV Nicht verbunden</footer>
    </div>
  );
}
